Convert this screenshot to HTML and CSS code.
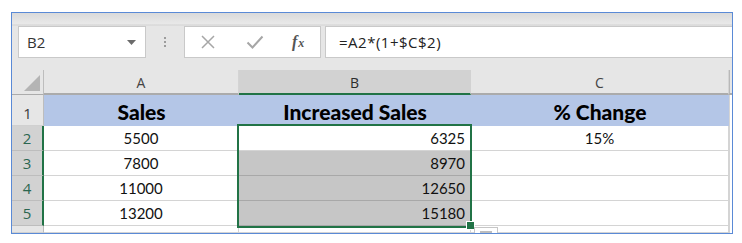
FILE: index.html
```html
<!DOCTYPE html>
<html>
<head>
<meta charset="utf-8">
<link rel="stylesheet" href="styles.css">
</head>
<body>
<div class="frame">
  <div class="toolbar">
    <div class="namebox">
      <span class="ref">B2</span>
      <svg class="caret" width="9" height="5" viewBox="0 0 9 5"><path d="M0 0H9L4.5 5Z" fill="#6b6b6b"/></svg>
    </div>
    <div class="grip"><i></i><i></i><i></i></div>
    <div class="fxbox">
      <svg class="btn" width="16" height="16" viewBox="0 0 16 16"><path d="M2 2L14 14M14 2L2 14" stroke="#a6a6a6" stroke-width="1.5" fill="none"/></svg>
      <svg class="btn" width="18" height="16" viewBox="0 0 18 16"><path d="M1.5 8.5L6.5 13.5L16.5 2.5" stroke="#a6a6a6" stroke-width="2" fill="none"/></svg>
      <span class="fx">f<span class="fxx">x</span></span>
    </div>
    <div class="formula">=A2*(1+$C$2)</div>
  </div>
  <div class="sheet">
    <div class="corner"><svg width="16" height="16" viewBox="0 0 16 16"><path d="M16 0V16H0Z" fill="#b4b4b4"/></svg></div>
    <div class="colhead">A</div>
    <div class="colhead sel">B</div>
    <div class="colhead">C</div>
    <div class="colhead end"></div>

    <div class="rowhead">1</div>
    <div class="title">Sales</div>
    <div class="title">Increased Sales</div>
    <div class="title">% Change</div>
    <div class="edge"></div>

    <div class="rowhead sel">2</div>
    <div class="cell center">5500</div>
    <div class="cell right">6325</div>
    <div class="cell center">15%</div>
    <div class="edge"></div>

    <div class="rowhead sel">3</div>
    <div class="cell center">7800</div>
    <div class="cell right hl">8970</div>
    <div class="cell"></div>
    <div class="edge"></div>

    <div class="rowhead sel">4</div>
    <div class="cell center">11000</div>
    <div class="cell right hl">12650</div>
    <div class="cell"></div>
    <div class="edge"></div>

    <div class="rowhead sel">5</div>
    <div class="cell center">13200</div>
    <div class="cell right hl">15180</div>
    <div class="cell"></div>
    <div class="edge"></div>

    <div class="rowhead"></div>
    <div class="cell"></div>
    <div class="cell"></div>
    <div class="cell"></div>
    <div class="edge"></div>

    <div class="selection"></div>
    <div class="handle"></div>
    <div class="paste"><i></i></div>
  </div>
</div>
</body>
</html>
```

FILE: styles.css
```css
* { box-sizing: border-box; }
html, body { margin: 0; padding: 0; background: #ffffff; }
body { width: 742px; height: 243px; overflow: hidden; }

.frame {
  margin: 12px 0 0 11px;
  width: 722px;
  height: 222px;
  border: 1px solid #5a8ad6;
  background: #e6e6e6;
  overflow: hidden;
}

.toolbar {
  height: 57px;
  display: flex;
  align-items: flex-start;
  padding: 13px 0 0 6px;
  background: linear-gradient(#dadada 0px, #e9e9e9 11px, #d2d2d2 12px, #e6e6e6 13px);
  font-family: "Open Sans", "Noto Sans", sans-serif;
}

.namebox {
  width: 128px;
  height: 32px;
  background: #fff;
  border: 1px solid #c9c9c9;
  display: flex;
  align-items: center;
  justify-content: space-between;
  padding: 0 9px 0 8px;
}
.ref { font-size: 15px; color: #333; }
.caret { display: block; }

.grip {
  width: 38px;
  height: 32px;
  display: flex;
  flex-direction: column;
  align-items: center;
  justify-content: center;
  gap: 2px;
}
.grip i { width: 2px; height: 2px; background: #9c9c9c; display: block; }

.fxbox {
  width: 137px;
  height: 32px;
  background: #fff;
  border: 1px solid #c9c9c9;
  display: flex;
  align-items: center;
  padding: 0 0 0 15px;
  gap: 30px;
}
.btn { display: block; }
.fx {
  font-family: "Liberation Serif", serif;
  font-style: italic;
  font-weight: bold;
  font-size: 16px;
  color: #555;
  margin-left: -2px;
}
.fxx { font-size: 12px; margin-left: 1px; }

.formula {
  margin-left: 4px;
  flex: 1;
  height: 32px;
  background: #fff;
  border: 1px solid #c9c9c9;
  border-right: none;
  padding: 0 0 0 13px;
  display: flex;
  align-items: center;
  font-size: 15px;
  letter-spacing: 0.5px;
  color: #222;
}

.sheet {
  position: relative;
  display: grid;
  grid-template-columns: 32px 195px 232px 258px 3px;
  grid-template-rows: 25px 31px 25px 25px 25px 25px 7px;
  background: #fff;
  font-family: "Lato", "Open Sans", sans-serif;
}

.corner {
  background: #e6e6e6;
  border-right: 1px solid #bdbdbd;
  border-bottom: 1px solid #ababab;
  display: flex;
  align-items: flex-end;
  justify-content: flex-end;
  padding: 0 3px 3px 0;
}
.corner svg { display: block; }

.colhead {
  background: #e6e6e6;
  border-bottom: 2px solid #ababab;
  border-right: 1px solid #d4d4d4;
  display: flex;
  align-items: center;
  justify-content: center;
  font-family: "Open Sans", "Noto Sans", sans-serif;
  font-size: 14px;
  color: #444;
  padding-top: 1px;
}
.colhead.sel { background: #d2d2d2; border-bottom-color: #217346; color: #2c2c2c; border-right-color: #d2d2d2; }
.colhead.end { border-right: none; border-left: 1px solid #b8b8b8; }

.rowhead {
  background: #e6e6e6;
  border-right: 1px solid #bdbdbd;
  border-bottom: 1px solid #d0d0d0;
  display: flex;
  align-items: flex-end;
  justify-content: center;
  padding-bottom: 3px;
  font-family: "Open Sans", "Noto Sans", sans-serif;
  font-size: 15px;
  color: #3a3a3a;
  line-height: 18px;
}
.rowhead.sel { background: #d2d2d2; border-right: 2px solid #217346; color: #2b6650; border-bottom-color: #bdbdbd; }

.title {
  background: #b4c6e7;
  display: flex;
  align-items: center;
  justify-content: center;
  font-weight: 900;
  font-size: 21px;
  color: #000;
  padding-top: 2px;
}

.edge { background: #fff; border-left: 1px solid #d4d4d4; }

.cell {
  border-right: 1px solid #d4d4d4;
  border-bottom: 1px solid #d4d4d4;
  display: flex;
  align-items: flex-end;
  font-size: 15px;
  color: #111;
  padding-bottom: 3px;
  line-height: 18px;
}
.center { justify-content: center; }
.right { justify-content: flex-end; padding-right: 5px; }
.hl { background: #c6c6c6; border-bottom-color: #a8a8a8; }

.selection {
  position: absolute;
  left: 225px;
  top: 54px;
  width: 235px;
  height: 104px;
  border: 2px solid #217346;
  pointer-events: none;
}
.handle {
  position: absolute;
  left: 455px;
  top: 152px;
  width: 7px;
  height: 7px;
  background: #217346;
  outline: 1px solid #fff;
}
.paste {
  position: absolute;
  left: 462px;
  top: 157px;
  width: 24px;
  height: 12px;
  border: 1px solid #c6c6c6;
  background: #fff;
  padding: 3px 5px;
}
.paste i { display: block; height: 4px; background: #bdbdbd; }
```
